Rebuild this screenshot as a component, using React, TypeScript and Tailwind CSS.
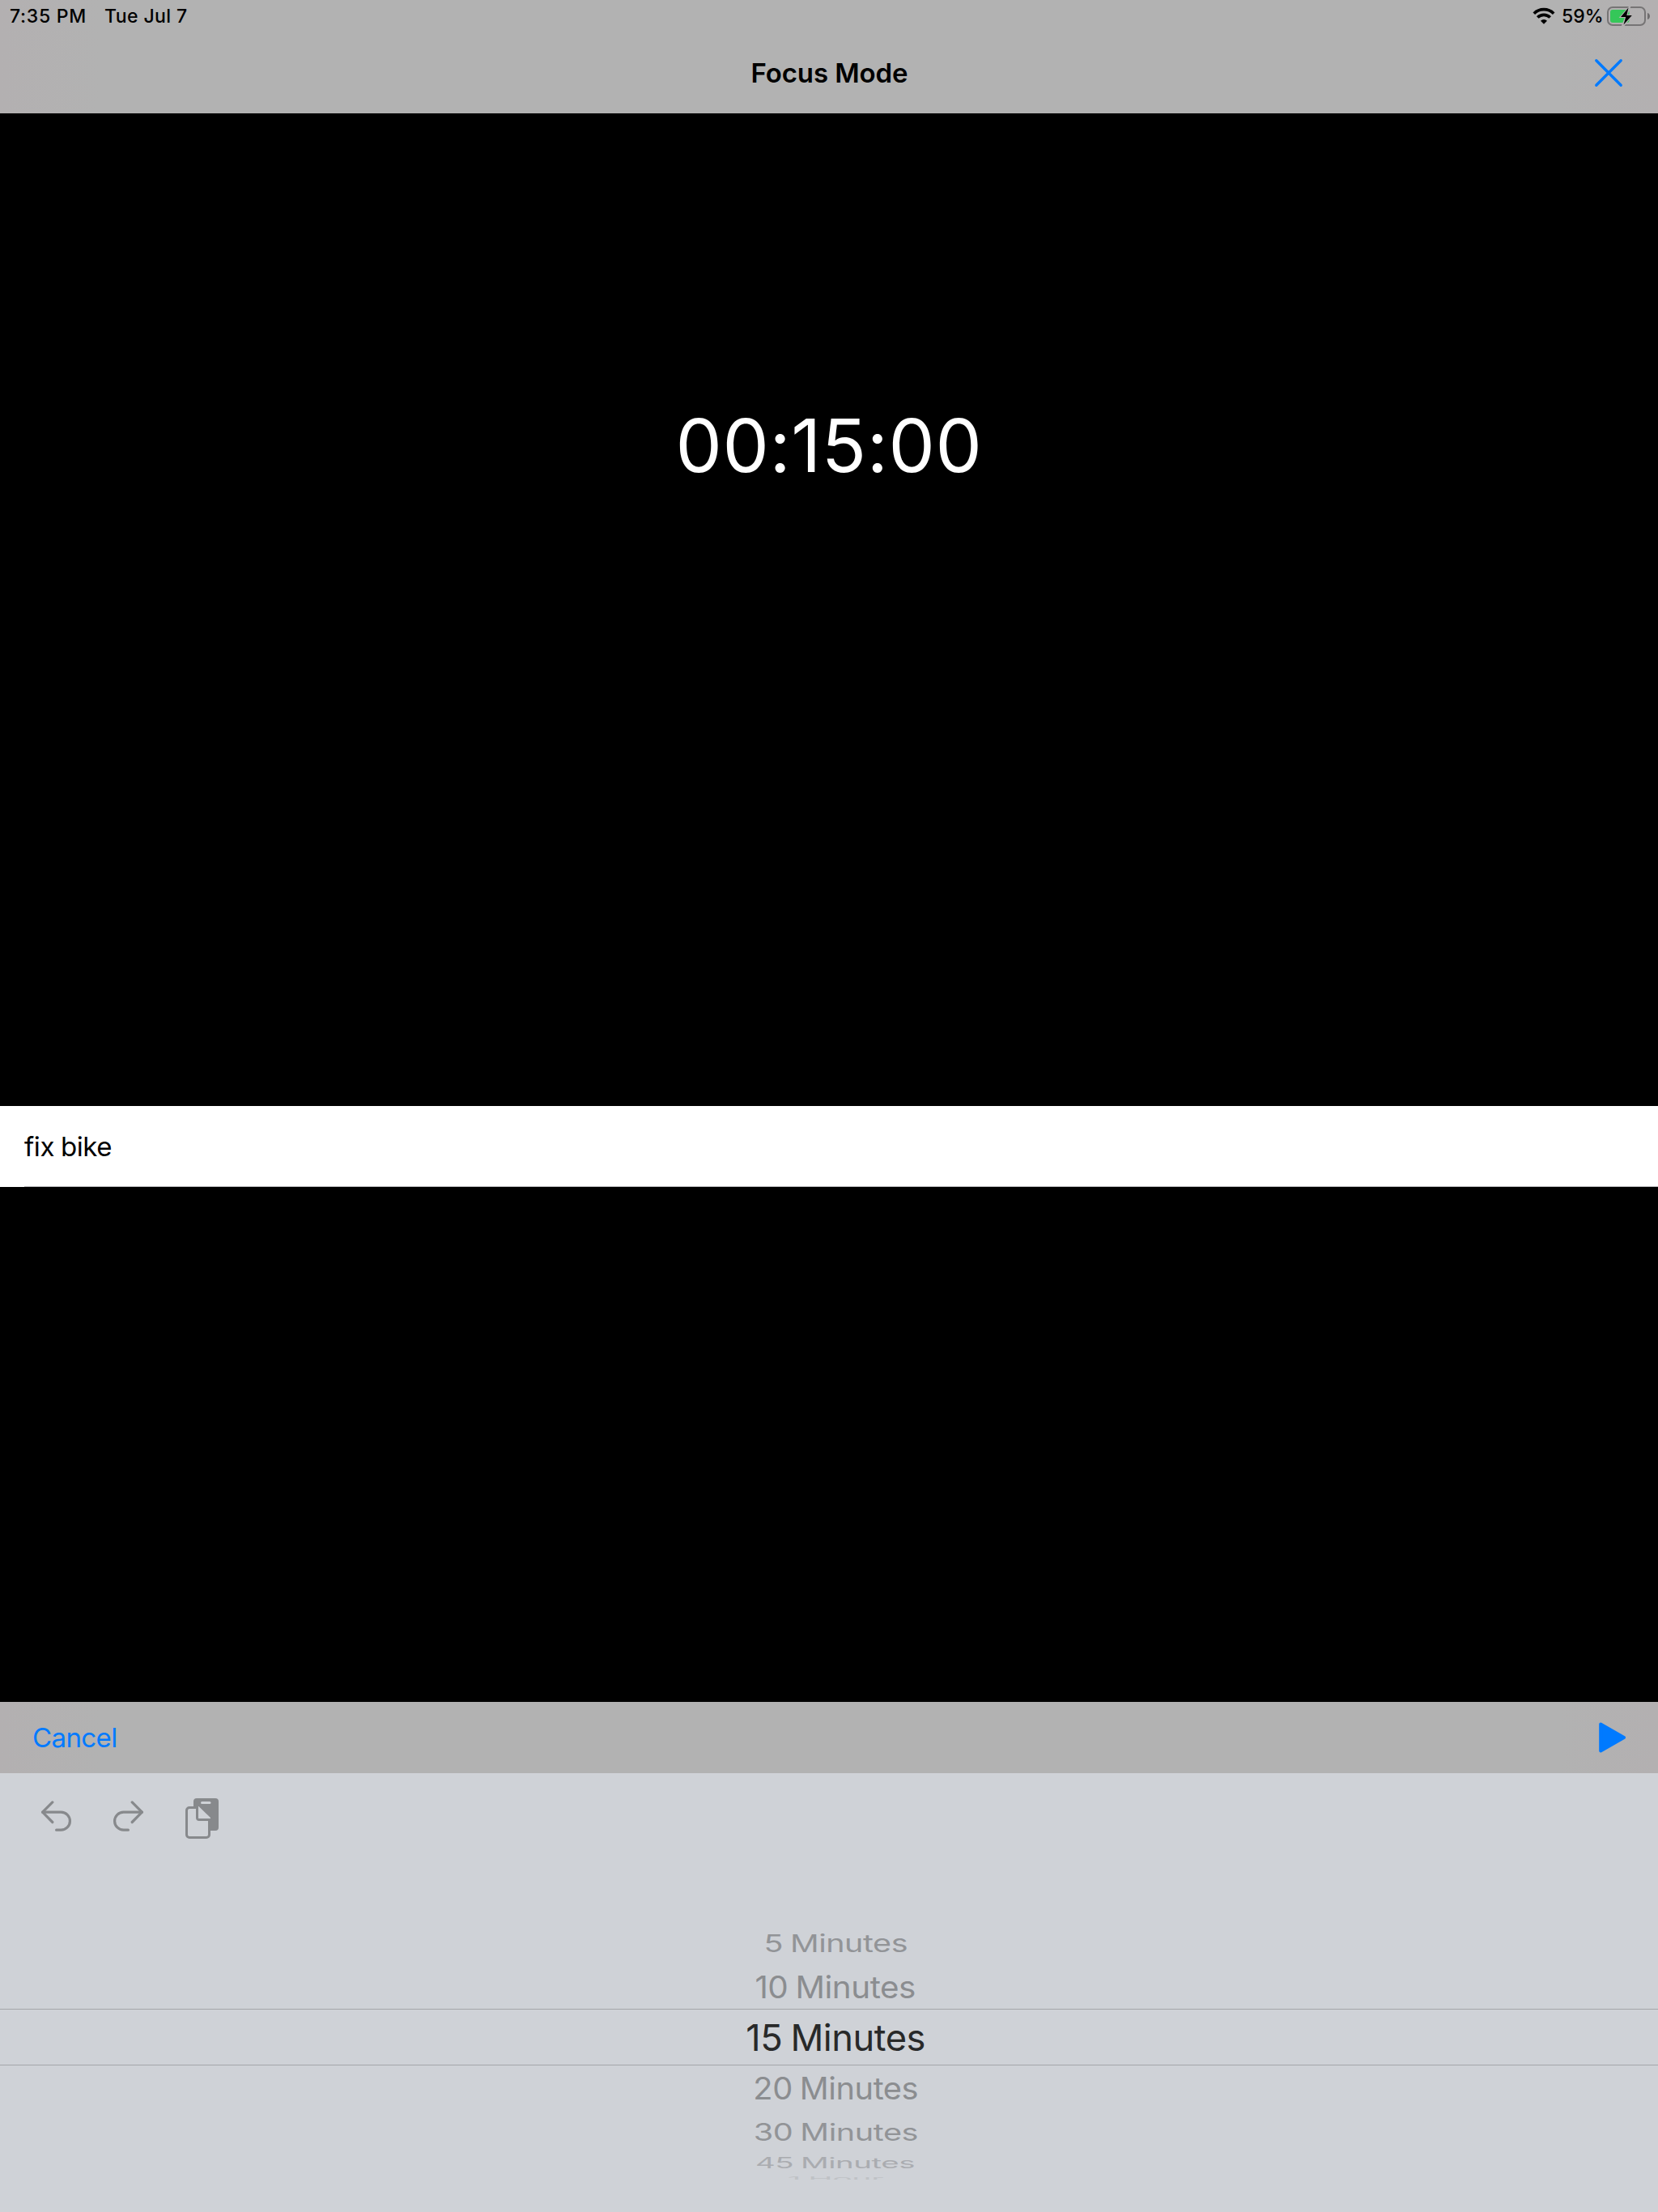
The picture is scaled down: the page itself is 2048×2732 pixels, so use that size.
import React from 'react';

type PickerRow = {
  label: string;
  row: string;
  text: string;
  sx: number;
  sy: number;
};

const rows: PickerRow[] = [
  { label: '5 Minutes', row: 'h-[54px]', text: 'text-[#929497]', sx: 0.877, sy: 0.66 },
  { label: '10 Minutes', row: 'h-[54px] pt-px', text: 'text-[#8b8d90]', sx: 0.897, sy: 0.835 },
  { label: '15 Minutes', row: 'h-[70px] border-y border-[#a4a6aa] pt-[2px]', text: 'text-[#282929]', sx: 1.006, sy: 1 },
  { label: '20 Minutes', row: 'h-[56px] pt-[2px]', text: 'text-[#8b8d90]', sx: 0.884, sy: 0.835 },
  { label: '30 Minutes', row: 'h-[52px] pt-[2px]', text: 'text-[#929497]', sx: 0.88, sy: 0.655 },
  { label: '45 Minutes', row: 'h-[24px] pt-[2px]', text: 'text-[#aaacb0]', sx: 0.853, sy: 0.4 },
  { label: '1 Hour', row: 'h-[15px]', text: 'text-[#bfc2c6]', sx: 0.91, sy: 0.18 },
];

const barColor = 'bg-[linear-gradient(to_right,#b3b0b1,#b2b2b2_6%,#b2b2b2_94%,#b3b0b1)]';

function Wifi() {
  return (
    <svg width="28" height="22" viewBox="0 0 28 22" fill="none" stroke="#000" strokeWidth="3.7">
      <path d="M1.8 7.7a17.400 17.400 0 0 1 24.400 0" />
      <path d="M6.300 12.500a10.900 10.900 0 0 1 15.400 0" />
      <path d="M14 20.700l-4-4a5.600 5.600 0 0 1 8 0z" fill="#000" stroke="none" />
    </svg>
  );
}

function Battery() {
  return (
    <svg width="54" height="26" viewBox="0 0 54 26">
      <rect x="1" y="2" width="46" height="22" rx="6" fill="none" stroke="#767475" strokeWidth="2" />
      <path d="M50 9c4 1 4 7 0 8z" fill="#6f6d6e" />
      <rect x="4" y="5" width="23.5" height="16" rx="3" fill="#35c759" />
      <path d="M27 1L14.6 15h7.200L17.800 25H21.500L32.500 11h-7L29.400 1z" fill="#b3b0b1" />
      <path d="M26.500 2.500L17 14h6.200L20.500 23.500 30.800 12h-6.500z" fill="#000" />
    </svg>
  );
}

function Undo({ flip }: { flip?: boolean }) {
  return (
    <svg
      className={flip ? '-scale-x-100' : ''}
      width="38"
      height="38"
      viewBox="0 0 38 38"
      fill="none"
      stroke="#87898c"
      strokeWidth="3.2"
      strokeLinecap="round"
      strokeLinejoin="round"
    >
      <path d="M14.800 1.900L2.600 14.200l12.200 12.300" />
      <path d="M2.600 14.200h22.800a11 11 0 0 1 0 22H19.600" />
    </svg>
  );
}

function Paste() {
  return (
    <svg width="41" height="50" viewBox="0 0 41 50">
      <path
        d="M14 0h23a4 4 0 0 1 4 4v32a4 4 0 0 1-4 4h-6V24L16.500 10H10V4a4 4 0 0 1 4-4z"
        fill="#87898c"
      />
      <rect x="19" y="4" width="12.500" height="3" rx="1.500" fill="#cfd2d7" />
      <path
        d="M14.500 11.500H5A3.500 3.500 0 0 0 1.500 15v30A3.500 3.500 0 0 0 5 48.500h21a3.500 3.500 0 0 0 3.500-3.500V26.500H17a2.500 2.500 0 0 1-2.500-2.500z"
        fill="#cfd2d7"
        stroke="#87898c"
        strokeWidth="3"
      />
      <path d="M16 13.500L27 25H17.500a1.500 1.500 0 0 1-1.500-1.500z" fill="#cfd2d7" />
    </svg>
  );
}

export default function App() {
  return (
    <div className="flex h-[2732px] w-[2048px] flex-col overflow-hidden bg-black font-['Inter',sans-serif] text-black">
      <header className={`flex h-[140px] shrink-0 flex-col ${barColor}`}>
        <div className="flex h-[40px] items-center pr-[9px] pl-[12px] text-[23px] font-medium">
          <span className="w-[117px] tracking-[0.75px] whitespace-nowrap">7:35 PM</span>
          <span className="tracking-[0.4px] whitespace-nowrap">Tue Jul 7</span>
          <div className="ml-auto flex items-center">
            <Wifi />
            <span className="ml-[8px] w-[56px] whitespace-nowrap">59%</span>
            <Battery />
          </div>
        </div>
        <div className="grid h-[100px] grid-cols-[1fr_auto_1fr] items-center">
          <span />
          <h1 className="pt-px pl-px text-[33px] font-semibold tracking-[-0.1px] whitespace-nowrap">Focus Mode</h1>
          <button className="mr-[43px] justify-self-end" aria-label="Close">
            <svg width="36" height="36" viewBox="0 0 36 36" stroke="#007aff" strokeWidth="3.4" strokeLinecap="round">
              <path d="M2.8 2.800l30.400 30.400M33.200 2.800L2.800 33.200" />
            </svg>
          </button>
        </div>
      </header>

      <section className="flex h-[1226px] shrink-0 justify-center pt-[350px]">
        <div className="h-[120px] text-[91px] leading-[120px] tracking-[0.6px] whitespace-nowrap text-white">
          00:15:00
        </div>
      </section>

      <section className="flex h-[100px] shrink-0 flex-col bg-white pl-[30px]">
        <div className="flex h-[99px] items-center pt-[3px] text-[33px] tracking-[-0.4px] [word-spacing:-1px]">
          fix bike
        </div>
        <div className="h-px bg-[#b9b9bb]" />
      </section>

      <div className="h-[636px] shrink-0" />

      <div className={`flex h-[88px] shrink-0 items-center justify-between pr-[39px] pl-[40px] ${barColor}`}>
        <button className="pt-px text-[33px] tracking-[-0.6px] text-[#007aff]">Cancel</button>
        <button className="-mt-px" aria-label="Start">
          <svg width="34" height="38" viewBox="0 0 34 38" fill="#007aff" stroke="#007aff" strokeWidth="4" strokeLinejoin="round">
            <path d="M2.200 2.500v33L31 19z" />
          </svg>
        </button>
      </div>

      <div className="flex min-h-0 flex-1 flex-col bg-[#cfd2d7]">
        <div className="flex h-[183px] shrink-0 items-start pl-[50px]">
          <div className="mt-[34px]">
            <Undo />
          </div>
          <div className="mt-[34px] ml-[52px]">
            <Undo flip />
          </div>
          <div className="mt-[31px] ml-[51px]">
            <Paste />
          </div>
        </div>
        <div className="flex h-[319px] flex-col overflow-hidden">
          {rows.map((r) => (
            <div key={r.label} className={`flex shrink-0 items-center justify-center pl-[16px] ${r.row}`}>
              <span
                className={`text-[45px] leading-[50px] tracking-[-0.5px] [word-spacing:-2px] whitespace-nowrap ${r.text}`}
                style={{ transform: `scale(${r.sx}, ${r.sy})` }}
              >
                {r.label}
              </span>
            </div>
          ))}
        </div>
      </div>
    </div>
  );
}
